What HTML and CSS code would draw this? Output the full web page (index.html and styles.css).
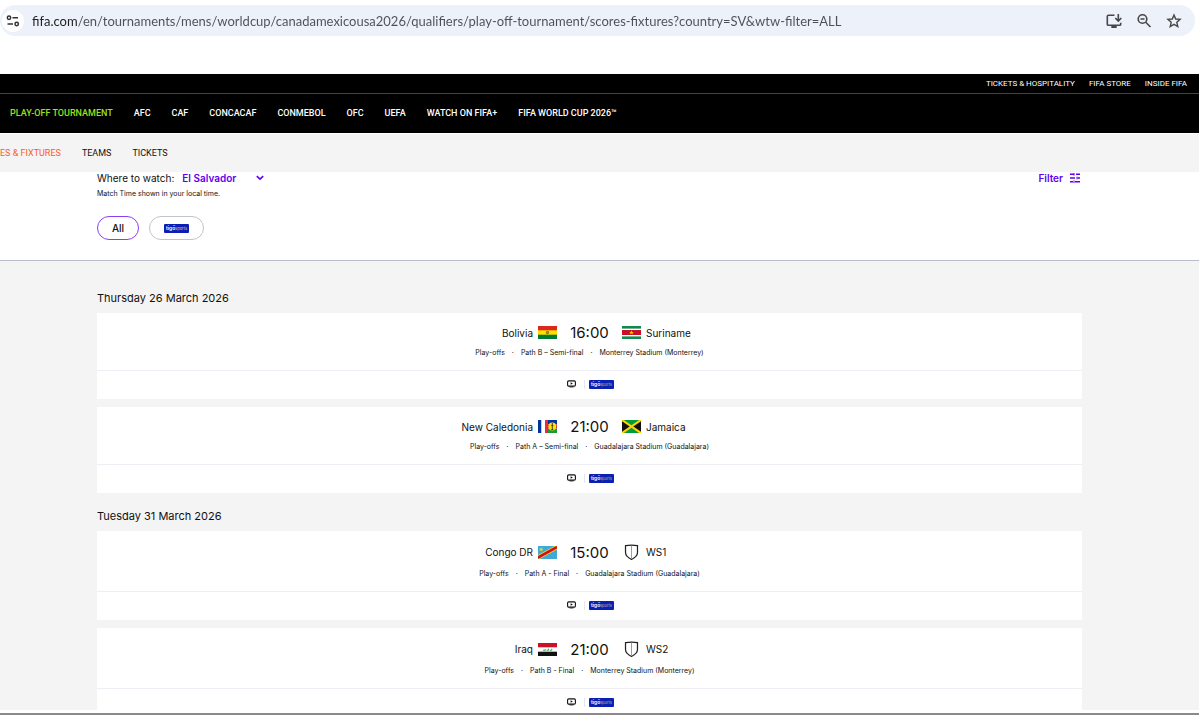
FILE: index.html
```html
<!DOCTYPE html>
<html lang="en">
<head>
    <meta charset="UTF-8">
    <meta name="viewport" content="width=device-width, initial-scale=1.0">
    <title>Play-Off Tournament | Scores & Fixtures</title>
    <link rel="stylesheet" href="styles.css">
</head>
<body>

    <!-- shared symbols -->
    <svg class="symbols" aria-hidden="true">
        <symbol id="tigo" viewBox="0 0 25 9">
            <rect width="25" height="9" rx="1" fill="#0a1fb4"/>
            <text x="2" y="6" class="tigo-name">tigő</text>
            <text x="11" y="6" class="tigo-sports">sports</text>
        </symbol>
        <symbol id="tv" viewBox="0 0 9 8">
            <rect x="0.6" y="0.9" width="7.8" height="5.2" rx="1.2" fill="none" stroke="#111" stroke-width="1.1"/>
            <path d="M3.6 2.2v2.6l2.2-1.3z" fill="#111"/>
            <path d="M2.5 7h4" stroke="#111" stroke-width="0.8"/>
        </symbol>
        <symbol id="shield" viewBox="0 0 20 17">
            <path d="M3.7 1.2c4-.5 8.600-.5 12.600 0v7.300c0 3.500-2.800 5.600-6.300 7.300-3.500-1.700-6.300-3.800-6.300-7.300z" fill="#fff" stroke="#222" stroke-width="1.300"/>
            <path d="M10 1.500v13.500" stroke="#999" stroke-width="1"/>
        </symbol>
    </svg>

    <div class="browser">
        <div class="toolbar">
            <div class="address">
                <button class="site-info" aria-label="Site information">
                    <svg width="14" height="12" viewBox="0 0 14 12" fill="none" stroke="#333" stroke-width="1.5">
                        <circle cx="3" cy="2.800" r="1.700"/><path d="M6.500 2.800h5.500M1.500 9h5.500"/><circle cx="10.700" cy="9" r="1.700"/>
                    </svg>
                </button>
                <input class="url" type="text" aria-label="Address" value="fifa.com/en/tournaments/mens/worldcup/canadamexicousa2026/qualifiers/play-off-tournament/scores-fixtures?country=SV&amp;wtw-filter=ALL">
                <button class="tool" aria-label="Install app">
                    <svg width="16" height="16" viewBox="0 0 16 16" fill="none" stroke="#474747" stroke-width="1.600">
                        <path d="M8.500 2.300H2.400Q1.300 2.300 1.300 3.400v7.800q0 1.100 1.100 1.100h11.200q1.100 0 1.100-1.100V9.800"/><path d="M5.300 14h5.400" stroke-width="2"/><path d="M12.300 1v6.500M9.300 5l3 3 3-3"/>
                    </svg>
                </button>
                <button class="tool" aria-label="Zoom">
                    <svg width="16" height="16" viewBox="0 0 16 16" fill="none" stroke="#474747" stroke-width="1.600">
                        <circle cx="6.500" cy="6" r="4.300"/><path d="M9.700 9.200l4.800 4.800M4.500 6h4"/>
                    </svg>
                </button>
                <button class="tool" aria-label="Bookmark">
                    <svg width="16" height="16" viewBox="0 0 16 16" fill="none" stroke="#474747" stroke-width="1.400">
                        <path d="M8 2l1.700 4 4.400.4-3.300 2.900 1 4.300L8 11.300l-3.800 2.300 1-4.300L1.900 6.400 6.300 6z"/>
                    </svg>
                </button>
            </div>
        </div>

        <header>
            <nav class="top-links">
                <a href="#">TICKETS &amp; HOSPITALITY</a>
                <a href="#">FIFA STORE</a>
                <a href="#">INSIDE FIFA</a>
            </nav>
            <nav class="main-links">
                <a href="#" class="active">PLAY-OFF TOURNAMENT</a>
                <a href="#">AFC</a>
                <a href="#">CAF</a>
                <a href="#">CONCACAF</a>
                <a href="#">CONMEBOL</a>
                <a href="#">OFC</a>
                <a href="#">UEFA</a>
                <a href="#">WATCH ON FIFA+</a>
                <a href="#">FIFA WORLD CUP 2026™</a>
            </nav>
        </header>

        <nav class="sub-links">
            <a href="#" class="active">ES &amp; FIXTURES</a>
            <a href="#">TEAMS</a>
            <a href="#">TICKETS</a>
        </nav>

        <section class="filters">
            <div class="watch-row">
                <label for="country">Where to watch:</label>
                <span class="select-wrap">
                    <select id="country">
                        <option>El Salvador</option>
                    </select>
                    <svg width="8" height="6" viewBox="0 0 8 6" fill="none" stroke="#6200ee" stroke-width="1.600"><path d="M0.800 1.200L4 4.200l3.200-3"/></svg>
                </span>
                <button class="filter-btn">Filter
                    <svg width="10" height="10" viewBox="0 0 10 10" fill="none" stroke="#6200ee" stroke-width="1.400">
                        <path d="M0 1.300h4M6 1.300h4M0 5h5M7.500 5H10M0 8.700h3M5 8.700h5"/>
                        <path d="M4 0v2.600M7 3.700v2.600M4 7.400V10" stroke-width="1"/>
                    </svg>
                </button>
            </div>
            <p class="note">Match Time shown in your local time.</p>
            <div class="chips">
                <button class="chip selected">All</button>
                <button class="chip channel" aria-label="Tigo Sports"><svg class="logo"><use href="#tigo"/></svg></button>
            </div>
        </section>

        <main>
            <h2>Thursday 26 March 2026</h2>

            <article class="match">
                <div class="details">
                    <div class="teams">
                        <div class="team home">Bolivia
                            <svg class="flag" viewBox="0 0 19 13">
                                <rect width="19" height="13" fill="#ffe000"/><rect width="19" height="4.300" fill="#da291c"/><rect y="8.700" width="19" height="4.300" fill="#007a33"/>
                                <circle cx="9.500" cy="6.500" r="1.700" fill="#8a7a2a"/><circle cx="9.500" cy="6.500" r="0.800" fill="#c98a2a"/>
                            </svg>
                        </div>
                        <span class="time">16:00</span>
                        <div class="team">
                            <svg class="flag" viewBox="0 0 19 13">
                                <rect width="19" height="13" fill="#fff"/><rect width="19" height="2.600" fill="#108a4f"/><rect y="10.400" width="19" height="2.600" fill="#108a4f"/><rect y="4" width="19" height="5" fill="#c8102e"/>
                                <path d="M9.500 4.300l.6 1.600h1.700l-1.400 1 .6 1.700-1.500-1-1.500 1 .6-1.700-1.400-1h1.700z" fill="#ffd100"/>
                            </svg>
                            Suriname
                        </div>
                    </div>
                    <p class="info"><span>Play-offs</span><span>·</span><span>Path B – Semi-final</span><span>·</span><span>Monterrey Stadium (Monterrey)</span></p>
                </div>
                <div class="broadcast">
                    <svg class="tv"><use href="#tv"/></svg>
                    <a href="#" aria-label="Tigo Sports"><svg class="logo"><use href="#tigo"/></svg></a>
                </div>
            </article>

            <article class="match">
                <div class="details">
                    <div class="teams">
                        <div class="team home">New Caledonia
                            <svg class="flag" viewBox="0 0 19 13">
                                <rect width="3.500" height="13" fill="#0032a0"/><rect x="3.500" width="3.500" height="13" fill="#fff"/><rect x="7" width="3" height="13" fill="#ed2939"/>
                                <rect x="10" width="9" height="4.300" fill="#0032a0"/><rect x="10" y="4.300" width="9" height="4.400" fill="#ed2939"/><rect x="10" y="8.700" width="9" height="4.300" fill="#189a3c"/>
                                <circle cx="14.300" cy="6.500" r="3.900" fill="#fae600"/><path d="M14.300 3v7M13.300 5.500h2M13.300 9.500h2" stroke="#333" stroke-width="0.900"/>
                            </svg>
                        </div>
                        <span class="time">21:00</span>
                        <div class="team">
                            <svg class="flag" viewBox="0 0 19 13">
                                <rect width="19" height="13" fill="#111"/><path d="M0 0h19L9.500 6.500zM0 13h19L9.500 6.500z" fill="#009b3a"/><path d="M0 0l19 13M19 0L0 13" stroke="#fed100" stroke-width="2.200"/>
                            </svg>
                            Jamaica
                        </div>
                    </div>
                    <p class="info"><span>Play-offs</span><span>·</span><span>Path A – Semi-final</span><span>·</span><span>Guadalajara Stadium (Guadalajara)</span></p>
                </div>
                <div class="broadcast">
                    <svg class="tv"><use href="#tv"/></svg>
                    <a href="#" aria-label="Tigo Sports"><svg class="logo"><use href="#tigo"/></svg></a>
                </div>
            </article>

            <h2>Tuesday 31 March 2026</h2>

            <article class="match final">
                <div class="details">
                    <div class="teams">
                        <div class="team home">Congo DR
                            <svg class="flag" viewBox="0 0 19 13">
                                <rect width="19" height="13" fill="#41a9d8"/><path d="M0 11.500L19 1" stroke="#f7d618" stroke-width="4.200"/><path d="M0 11.500L19 1" stroke="#ce1021" stroke-width="2.600"/>
                                <path d="M3.200 1.200l.6 1.500h1.600l-1.300 1 .5 1.600-1.400-1-1.400 1 .5-1.600-1.300-1h1.600z" fill="#f7e018"/>
                            </svg>
                        </div>
                        <span class="time">15:00</span>
                        <div class="team">
                            <svg class="shield"><use href="#shield"/></svg>
                            WS1
                        </div>
                    </div>
                    <p class="info"><span>Play-offs</span><span>·</span><span>Path A - Final</span><span>·</span><span>Guadalajara Stadium (Guadalajara)</span></p>
                </div>
                <div class="broadcast">
                    <svg class="tv"><use href="#tv"/></svg>
                    <a href="#" aria-label="Tigo Sports"><svg class="logo"><use href="#tigo"/></svg></a>
                </div>
            </article>

            <article class="match final">
                <div class="details">
                    <div class="teams">
                        <div class="team home">Iraq
                            <svg class="flag" viewBox="0 0 19 13">
                                <rect width="19" height="13" fill="#fff"/><rect width="19" height="4.300" fill="#ce1126"/><rect y="8.700" width="19" height="4.300" fill="#111"/>
                                <path d="M5 7.300h2.200V6M8.500 7.300h2V5.700M11.800 7.300h2V5.700" fill="none" stroke="#2c9a5c" stroke-width="0.900"/>
                            </svg>
                        </div>
                        <span class="time">21:00</span>
                        <div class="team">
                            <svg class="shield"><use href="#shield"/></svg>
                            WS2
                        </div>
                    </div>
                    <p class="info"><span>Play-offs</span><span>·</span><span>Path B - Final</span><span>·</span><span>Monterrey Stadium (Monterrey)</span></p>
                </div>
                <div class="broadcast">
                    <svg class="tv"><use href="#tv"/></svg>
                    <a href="#" aria-label="Tigo Sports"><svg class="logo"><use href="#tigo"/></svg></a>
                </div>
            </article>
        </main>
        <div class="window-edge"></div>
    </div>

</body>
</html>
```
FILE: styles.css
```css
* {
    box-sizing: border-box;
    margin: 0;
    padding: 0;
}
body {
    font-family: Inter, Arial, sans-serif;
    background-color: #fff;
    color: #111;
}
a {
    color: inherit;
    text-decoration: none;
}
button, select, input {
    font-family: inherit;
    color: inherit;
    background: none;
    border: none;
    outline: none;
}
button {
    cursor: pointer;
}
svg {
    display: block;
    flex-shrink: 0;
}
.symbols {
    display: none;
}
.browser {
    display: flex;
    flex-direction: column;
    height: 100vh;
    overflow: hidden;
}

/* Address bar */
.toolbar {
    padding: 5px 4px 38px 0;
}
.address {
    display: flex;
    align-items: center;
    height: 31px;
    padding: 0 13px 0 2px;
    background-color: #ecf1fa;
    border-radius: 16px;
}
.site-info {
    display: flex;
    align-items: center;
    justify-content: center;
    width: 22px;
    height: 22px;
    background-color: #fff;
    border-radius: 50%;
}
.url {
    flex: 1;
    min-width: 0;
    margin-left: 8px;
    font-family: Lato, "Open Sans", sans-serif;
    font-size: 13px;
    background: linear-gradient(90deg, #1f1f1f 46px, #4c5056 46px);
    -webkit-background-clip: text;
    background-clip: text;
    color: transparent;
}
.tool {
    margin-left: 14px;
}

/* Site header */
header, .sub-links {
    font-family: Roboto, Arial, sans-serif;
}
header {
    background-color: #000;
    color: #fff;
    font-weight: 500;
}
.top-links {
    display: flex;
    justify-content: flex-end;
    gap: 14px;
    padding: 0 12px;
    font-size: 8px;
    font-weight: 400;
    line-height: 19px;
    border-bottom: 1px solid #444;
}
.main-links {
    display: flex;
    gap: 21px;
    padding: 0 10px;
    font-size: 9px;
    line-height: 39px;
    white-space: nowrap;
}
.main-links .active {
    color: #9be11d;
}
.sub-links {
    display: flex;
    gap: 21px;
    margin-top: 1px;
    font-size: 9px;
    line-height: 38px;
    background-color: #f4f4f4;
}
.sub-links .active {
    color: #ff5a1f;
}

/* Filters */
.filters {
    padding: 0 117px 20px 97px;
    border-bottom: 1px solid #b9bdca;
}
.watch-row {
    display: flex;
    align-items: center;
    height: 12px;
    font-size: 10px;
}
.select-wrap {
    display: flex;
    align-items: center;
    margin-left: 8px;
    color: #6200ee;
}
.select-wrap select {
    width: 74px;
    appearance: none;
    font-size: 10px;
    font-weight: 600;
}
.filter-btn {
    display: flex;
    align-items: center;
    gap: 7px;
    margin-left: auto;
    padding-right: 2px;
    font-size: 10px;
    font-weight: 600;
    color: #6200ee;
}
.note {
    margin-top: 4px;
    font-size: 7px;
    line-height: 12px;
}
.chips {
    display: flex;
    gap: 10px;
    margin-top: 16px;
}
.chip {
    display: flex;
    align-items: center;
    justify-content: center;
    width: 42px;
    height: 24px;
    font-size: 10px;
    font-weight: 500;
    border: 1px solid #c0c4ce;
    border-radius: 12px;
}
.chip.channel {
    width: 55px;
}
.chip.selected {
    border-color: #8a3ff5;
}
.logo {
    width: 25px;
    height: 9px;
}
.tigo-name {
    font-size: 5px;
    font-weight: 600;
    fill: #fff;
}
.tigo-sports {
    font-size: 4px;
    fill: #d0b48a;
}

/* Match list */
main {
    flex: 1;
    min-height: 0;
    overflow: hidden;
    padding: 30px 117px 0 97px;
    background-color: #f4f4f4;
}
h2 {
    padding-bottom: 7px;
    font-size: 11px;
    font-weight: 400;
    line-height: 15px;
}
.match {
    margin-bottom: 8px;
    background-color: #fff;
}
.match + h2 {
    padding-top: 8px;
}
.details {
    padding: 8px 0 11px;
    border-bottom: 1px solid #eeeef4;
}
.teams {
    display: grid;
    grid-template-columns: 1fr 65px 1fr;
    align-items: center;
    height: 23px;
}
.final .teams {
    height: 26px;
}
.team {
    display: flex;
    align-items: center;
    gap: 5px;
    font-size: 10px;
}
.home {
    justify-content: flex-end;
}
.time {
    font-size: 15px;
    text-align: center;
}
.flag {
    width: 19px;
    height: 13px;
}
.shield {
    width: 19px;
    height: 17px;
}
.info {
    display: flex;
    justify-content: center;
    gap: 7px;
    margin-top: 3px;
    font-size: 7px;
    line-height: 12px;
}
.broadcast {
    display: flex;
    align-items: center;
    justify-content: center;
    gap: 8px;
    height: 28px;
    padding-left: 2px;
    padding-bottom: 2px;
}
.tv {
    width: 9px;
    height: 8px;
}
.broadcast a {
    padding-left: 4px;
    border-left: 1px solid #e6e6ee;
}
.window-edge {
    height: 5px;
    border-bottom: 2px solid #8a8a8a;
}
```
